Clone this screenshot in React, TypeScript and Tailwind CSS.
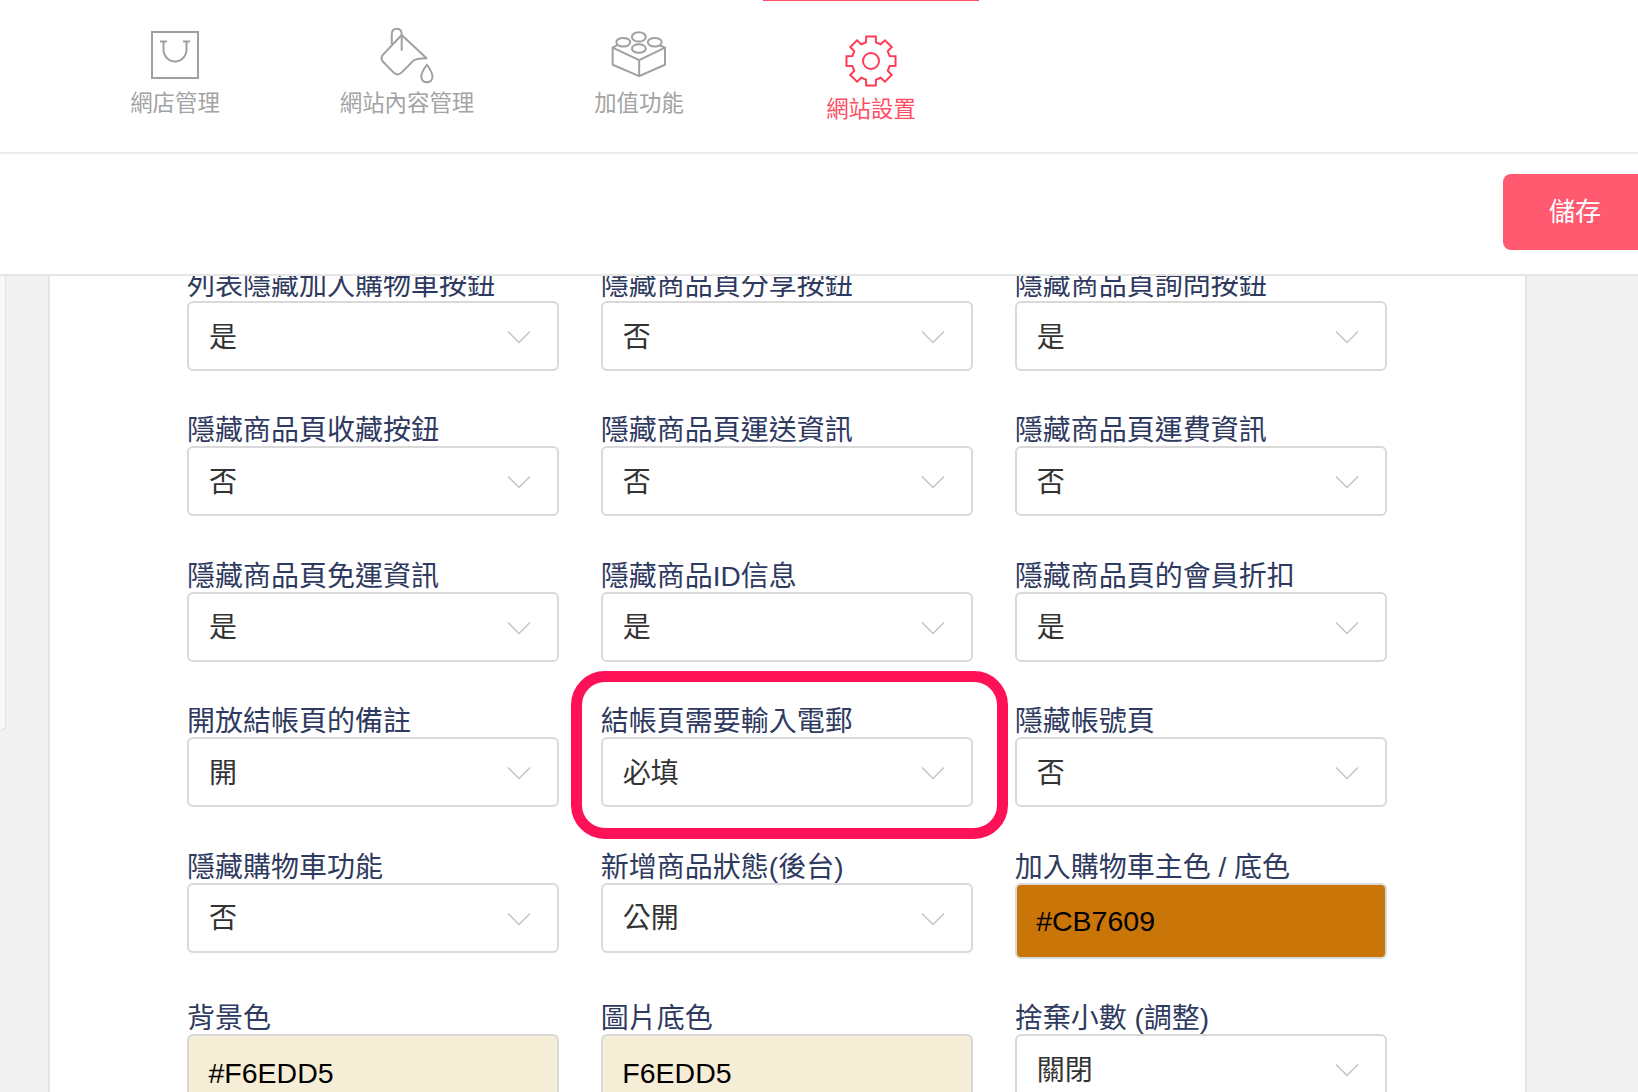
const navGray = "#a0a0a0";

const BagIcon = () => (
  <svg width="48" height="48" viewBox="0 0 48 48" fill="none" stroke={navGray} strokeWidth="2">
    <rect x="1" y="1" width="46" height="46" />
    <path d="M9 10.5h7M32 10.5h7M12.5 10.5v8a11.5 12 0 0 0 23 0v-8" />
  </svg>
);

const BucketIcon = () => (
  <svg width="55" height="57" viewBox="960 78 165 172" fill="none" stroke={navGray} strokeWidth="6" strokeLinejoin="round">
    <path d="M1025 102L1100 172Q1075 172 1062 178L1025 215Q1012 228 1000 215L968 182Q960 172 968 162Z" />
    <path d="M995 130V100Q995 83 1010 83Q1025 83 1025 100V150" />
    <path d="M1101 192Q1084 215 1084 228A17 17 0 0 0 1118 228Q1118 215 1101 192Z" />
  </svg>
);

const BlockIcon = () => (
  <svg width="57" height="49" viewBox="213 91 172 146" fill="white" stroke={navGray} strokeWidth="6" strokeLinejoin="round">
    <path d="M232 133L218 140L298 178L376 140L360 133" fill="none" />
    <path d="M218 140V192L298 226L376 192V140" fill="none" />
    <path d="M298 178V226" fill="none" />
    <ellipse cx="297" cy="108" rx="21" ry="14" />
    <ellipse cx="250" cy="124" rx="21" ry="13" />
    <ellipse cx="345" cy="124" rx="21" ry="13" />
    <ellipse cx="297" cy="143" rx="21" ry="13" />
  </svg>
);

const gearPoints = () => {
  const pts: string[] = [];
  for (let i = 0; i < 8; i++) {
    const a = i * 45 - 90;
    [[58, -15], [75, -11], [75, 11], [58, 15]].forEach(([r, d]) => {
      const t = ((a + d) * Math.PI) / 180;
      pts.push(`${(78 + r * Math.cos(t)).toFixed(1)},${(78 + r * Math.sin(t)).toFixed(1)}`);
    });
  }
  return pts.join(" ");
};

const GearIcon = () => (
  <svg width="52" height="52" viewBox="0 0 156 156" fill="none" stroke="#ff3b57" strokeWidth="6">
    <polygon points={gearPoints()} />
    <circle cx="78" cy="78" r="24" />
  </svg>
);

const Chevron = () => (
  <svg width="24" height="14" viewBox="0 0 24 14" fill="none" stroke="#c4c4c4" strokeWidth="1.5" className="shrink-0 mt-[2px]">
    <path d="M1 1.5L12 12.5L23 1.5" />
  </svg>
);

const NavItem = ({ icon, label }: { icon: React.ReactNode; label: string }) => (
  <div className="w-[232px] flex flex-col items-center pt-[26px]">
    <div className="h-[58px] flex items-center justify-center">{icon}</div>
    <span className="text-[22.4px] leading-[30px] mt-[5px] text-[#a3a3a3]">{label}</span>
  </div>
);

type Field = { label: string; value: string; color?: string; highlight?: boolean };

const fields: Field[] = [
  { label: "列表隱藏加入購物車按鈕", value: "是" },
  { label: "隱藏商品頁分享按鈕", value: "否" },
  { label: "隱藏商品頁詢問按鈕", value: "是" },
  { label: "隱藏商品頁收藏按鈕", value: "否" },
  { label: "隱藏商品頁運送資訊", value: "否" },
  { label: "隱藏商品頁運費資訊", value: "否" },
  { label: "隱藏商品頁免運資訊", value: "是" },
  { label: "隱藏商品ID信息", value: "是" },
  { label: "隱藏商品頁的會員折扣", value: "是" },
  { label: "開放結帳頁的備註", value: "開" },
  { label: "結帳頁需要輸入電郵", value: "必填", highlight: true },
  { label: "隱藏帳號頁", value: "否" },
  { label: "隱藏購物車功能", value: "否" },
  { label: "新增商品狀態(後台)", value: "公開" },
  { label: "加入購物車主色 / 底色", value: "#CB7609", color: "bg-[#ca7508]" },
  { label: "背景色", value: "#F6EDD5", color: "bg-[#f5edd5]" },
  { label: "圖片底色", value: "F6EDD5", color: "bg-[#f5edd5]" },
  { label: "捨棄小數 (調整)", value: "關閉" },
];

const FormField = ({ label, value, color, highlight }: Field) => (
  <div className="relative mb-[39.45px]">
    <div className="h-[36px] text-[28px] leading-[41.5px] text-[#2f3a60] whitespace-nowrap">{label}</div>
    {color ? (
      <div className={`h-[76px] pl-[19.5px] pt-[2px] flex items-center rounded-[6px] border-2 border-[#d9d9d9] text-[28.5px] text-black ${color}`}>
        {value}
      </div>
    ) : (
      <div className="relative h-[70px] pl-[20px] pr-[26px] flex items-center justify-between rounded-[6px] border-2 border-[#d9d9d9] bg-white text-[28px] text-[#333333]">
        <span className="pt-[3px]">{value}</span>
        <Chevron />
      </div>
    )}
    {highlight && (
      <div className="absolute left-[-30px] top-[-30px] w-[437px] h-[168px] rounded-[34px] border-[11px] border-[#ff1158]" />
    )}
  </div>
);

export default function App() {
  return (
    <div
      className="h-[1092px] w-[1638px] overflow-hidden flex flex-col bg-[#f1f1f1]"
      style={{ fontFamily: '"Liberation Sans", "Noto Sans CJK TC", sans-serif' }}
    >
      <header className="h-[154px] shrink-0 bg-white border-b-2 border-[#ececec] pl-[59px] flex">
        <NavItem icon={<BagIcon />} label="網店管理" />
        <NavItem icon={<BucketIcon />} label="網站內容管理" />
        <NavItem icon={<BlockIcon />} label="加值功能" />
        <div className="relative w-[232px] flex flex-col items-center pt-[32px]">
          <div className="absolute top-0 left-[8px] w-[216px] h-px bg-[#ff4d64]" />
          <div className="h-[58px] flex items-center justify-center">
            <GearIcon />
          </div>
          <span className="text-[22.4px] leading-[30px] mt-[5px] text-[#ff4d64]">網站設置</span>
        </div>
      </header>

      <div className="h-[122px] shrink-0 bg-white border-b-2 border-[#e6e6e6] flex items-center justify-end">
        <button className="w-[144px] h-[76px] mb-[4px] mr-[-9px] rounded-l-[8px] bg-[#ff5a70] text-white text-[26px]">儲存</button>
      </div>

      <main className="flex-1 min-h-0 flex overflow-hidden">
        <div className="w-[6px] h-[455px] shrink-0 bg-[#f8f8f8] border-r border-b border-[#e2e2e2] rounded-br-[8px]" />
        <section className="ml-[42px] w-[1479px] shrink-0 bg-white border-x-2 border-[#e6e6e6] pl-[137px]">
          <div className="-mt-[11px] w-[1199.5px] grid grid-cols-3 gap-x-[42px] items-start">
            {fields.map((f) => (
              <FormField key={f.label} {...f} />
            ))}
          </div>
        </section>
      </main>
    </div>
  );
}
